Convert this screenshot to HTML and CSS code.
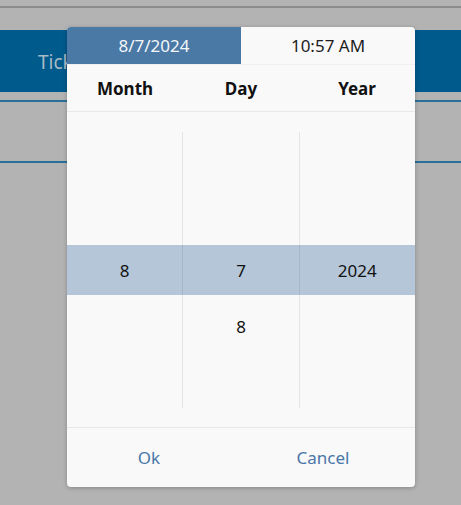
FILE: index.html
```html
<!DOCTYPE html>
<html>
<head>
<meta charset="utf-8">
<link rel="stylesheet" href="styles.css">
</head>
<body>
<div class="page">
  <div class="topline"></div>
  <div class="band"><span class="band-title">Tickets</span></div>
  <div class="rule rule-1"></div>
  <div class="rule rule-2"></div>
</div>

<div class="dialog">
  <div class="tabs">
    <div class="tab tab-active">8/7/2024</div>
    <div class="tab">10:57 AM</div>
  </div>
  <div class="heads">
    <div class="head">Month</div>
    <div class="head">Day</div>
    <div class="head">Year</div>
  </div>
  <div class="picker">
    <div class="selband"></div>
    <div class="cols">
      <div class="col">
        <div class="item"></div><div class="item"></div>
        <div class="item">8</div>
        <div class="item"></div><div class="item"></div>
      </div>
      <div class="col col-mid">
        <div class="item"></div><div class="item"></div>
        <div class="item">7</div>
        <div class="item">8</div><div class="item"></div>
      </div>
      <div class="col">
        <div class="item"></div><div class="item"></div>
        <div class="item">2024</div>
        <div class="item"></div><div class="item"></div>
      </div>
    </div>
  </div>
  <div class="footer">
    <div class="btn">Ok</div>
    <div class="btn">Cancel</div>
  </div>
</div>
</body>
</html>
```

FILE: styles.css
```css
* { box-sizing: border-box; }
html, body {
  margin: 0;
  padding: 0;
  width: 461px;
  height: 505px;
  overflow: hidden;
  background: #b3b3b3;
  font-family: "Segoe UI", "Noto Sans", "Open Sans", sans-serif;
}
.page {
  padding-top: 6px;
}
.topline {
  height: 2px;
  background: #8c8c8c;
}
.band {
  margin-top: 22px;
  height: 62px;
  background: #005a8c;
  padding-left: 38px;
  display: flex;
  align-items: center;
}
.band-title {
  color: #a9b9c5;
  font-size: 19px;
  padding-top: 2px;
}
.rule {
  height: 2px;
  background: #2a6f9a;
}
.rule-1 { margin-top: 8px; }
.rule-2 { margin-top: 59px; }

.dialog {
  position: absolute;
  left: 67px;
  top: 27px;
  width: 348px;
  height: 460px;
  background: #f9f9f9;
  border-radius: 4px;
  overflow: hidden;
  box-shadow: 0 1px 4px rgba(0,0,0,0.25);
  display: flex;
  flex-direction: column;
}
.tabs {
  display: flex;
  height: 37px;
}
.tab {
  flex: 1;
  display: flex;
  align-items: center;
  justify-content: center;
  font-size: 17px;
  color: #1e1e1e;
  padding-bottom: 1px;
}
.tab-active {
  background: #4a79a6;
  color: #f4f6f9;
}
.heads {
  display: flex;
  height: 48px;
  border-bottom: 1px solid #e8e8e8;
  border-top: 1px solid #efefef;
}
.head {
  flex: 1;
  display: flex;
  align-items: center;
  justify-content: center;
  font-weight: bold;
  font-size: 17px;
  color: #111;
}
.picker {
  position: relative;
  height: 316px;
  border-bottom: 1px solid #e8e8e8;
  padding: 20px 0;
}
.selband {
  position: absolute;
  left: 0;
  right: 0;
  top: 133px;
  height: 50px;
  background: #b4c6d8;
}
.cols {
  position: relative;
  display: flex;
  height: 276px;
}
.col {
  flex: 1;
  display: flex;
  flex-direction: column;
  justify-content: center;
  align-items: center;
}
.col-mid {
  border-left: 1px solid rgba(0,0,0,0.08);
  border-right: 1px solid rgba(0,0,0,0.08);
}
.item {
  height: 56px;
  display: flex;
  align-items: center;
  justify-content: center;
  font-size: 17px;
  color: #111;
  flex-shrink: 0;
}
.footer {
  flex: 1;
  display: flex;
}
.btn {
  flex: 1;
  display: flex;
  align-items: center;
  justify-content: center;
  padding-right: 10px;
  font-size: 17px;
  color: #4a76a8;
}
```
